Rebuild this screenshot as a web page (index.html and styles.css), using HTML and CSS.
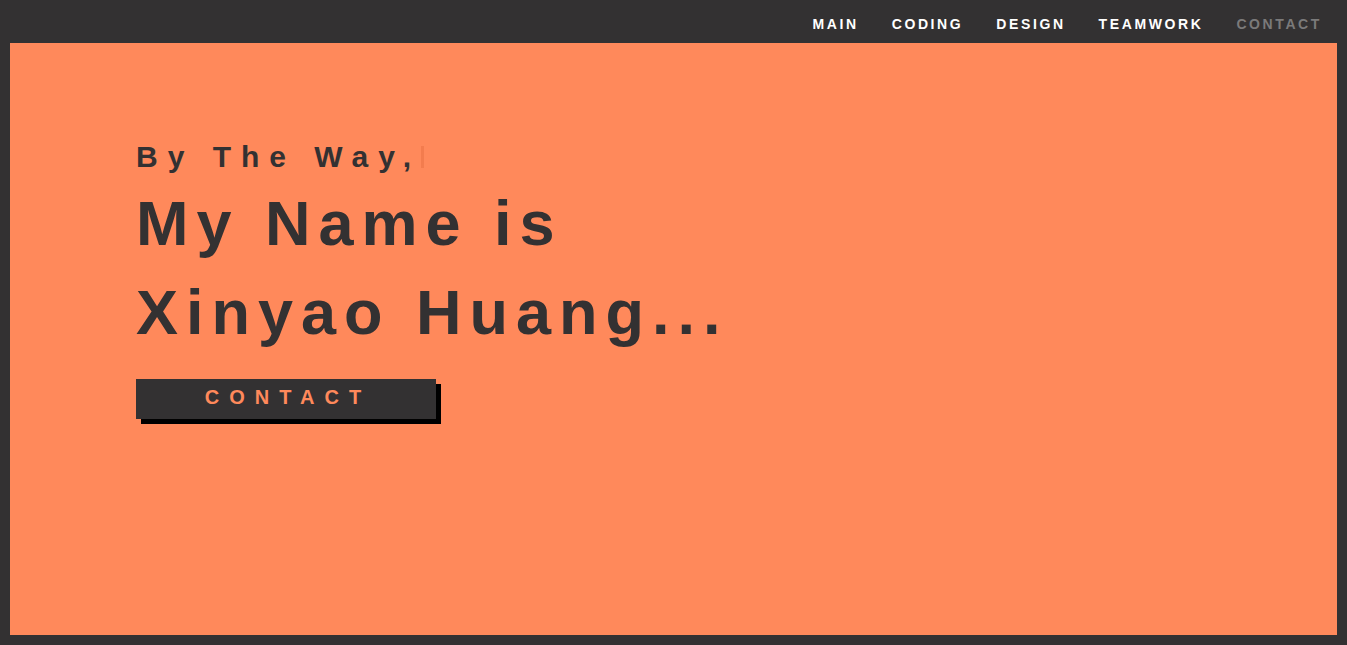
FILE: index.html
```html
<!DOCTYPE html>
<html>
<head>
<meta charset="utf-8">
<link rel="stylesheet" href="styles.css">
</head>
<body>
<nav class="nav">
  <a class="nav-link">MAIN</a>
  <a class="nav-link">CODING</a>
  <a class="nav-link">DESIGN</a>
  <a class="nav-link">TEAMWORK</a>
  <a class="nav-link active">CONTACT</a>
</nav>
<main class="hero">
  <div class="intro">
    <p class="lead">By The Way,<span class="cursor"></span></p>
    <h1 class="title">My Name is<br>Xinyao Huang...</h1>
    <button class="btn">CONTACT</button>
  </div>
</main>
</body>
</html>
```
FILE: styles.css
```css
html, body { margin: 0; padding: 0; }
body {
  background: #333132;
  font-family: "Liberation Sans", Arial, sans-serif;
  height: 645px;
  box-sizing: border-box;
  padding: 0 10px 10px 10px;
  display: flex;
  flex-direction: column;
}
.nav {
  height: 43px;
  display: flex;
  justify-content: flex-end;
  align-items: center;
  gap: 33px;
  padding-right: 15px;
}
.nav-link {
  color: #fff;
  font-weight: bold;
  font-size: 14px;
  letter-spacing: 2.6px;
  padding-top: 5px;
}
.nav-link.active { color: #7b7a7a; }
.hero {
  flex: 1;
  background: #ff895b;
  padding: 96px 0 0 126px;
}
.lead {
  margin: 0;
  font-size: 30px;
  font-weight: bold;
  letter-spacing: 10px;
  color: #333132;
  line-height: 36px;
  display: flex;
  align-items: center;
}
.cursor {
  display: inline-block;
  width: 3px;
  height: 22px;
  background: #f37c4e;
  margin-left: 0;
}
.title {
  margin: 4px 0 0 0;
  font-size: 63px;
  font-weight: bold;
  letter-spacing: 8px;
  color: #333132;
  line-height: 89px;
}
.btn {
  margin-top: 22px;
  width: 300px;
  height: 40px;
  background: #333132;
  border: none;
  box-shadow: 5px 5px 0 #000;
  color: #ff895b;
  font-family: "Liberation Sans", Arial, sans-serif;
  font-weight: bold;
  font-size: 20px;
  letter-spacing: 10px;
  padding: 0 0 3px 4px;
  display: block;
}
```
